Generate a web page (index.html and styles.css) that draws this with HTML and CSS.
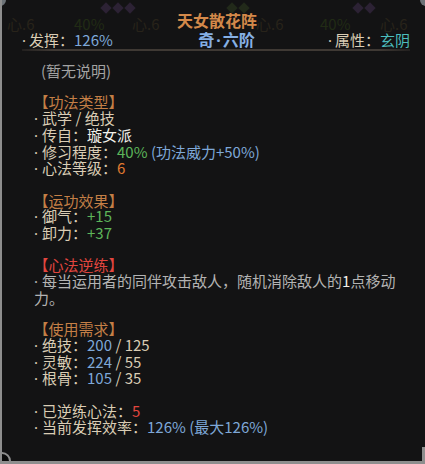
FILE: index.html
```html
<!DOCTYPE html>
<html lang="zh">
<head>
<meta charset="utf-8">
<link rel="stylesheet" href="styles.css">
</head>
<body>
<div class="tip">
  <div class="ghost">
    <span class="g-knob g-knob-l"></span>
    <span class="g-knob g-knob-r"></span>
    <span class="g-dia" style="left:100px"></span>
    <span class="g-dia" style="left:112px"></span>
    <span class="g-dia" style="left:124px"></span>
    <span class="g-dia g-dia-green" style="left:226px"></span>
    <span class="g-dia g-dia-green" style="left:238px"></span>
    <span class="g-dia" style="left:352px"></span>
    <span class="g-dia" style="left:364px"></span>
    <span class="g-txt g-brown" style="left:5px">心.6</span>
    <span class="g-txt g-green" style="left:72px">40%</span>
    <span class="g-txt g-brown" style="left:130px">心.6</span>
    <span class="g-txt g-brown" style="left:254px">心.6</span>
    <span class="g-txt g-green" style="left:318px">40%</span>
    <span class="g-txt g-brown" style="left:378px">心.6</span>
  </div>

  <div class="head">
    <div class="title">天女散花阵</div>
    <div class="subrow">
      <span class="sub-l"><span class="d">·</span>发挥：<span class="blue">126%</span></span>
      <span class="grade">奇<span class="d">·</span>六阶</span>
      <span class="sub-r"><span class="d">·</span>属性：<span class="cyan">玄阴</span></span>
    </div>
    <div class="sep"></div>
  </div>

  <div class="body">
    <div class="ln ind grey">(暂无说明)</div>
    <div class="gap"></div>
    <div class="ln ind sec"><span class="br">【</span>功法类型<span class="br">】</span></div>
    <div class="ln"><span class="d">·</span>武学 / 绝技</div>
    <div class="ln"><span class="d">·</span>传自：<span class="white">璇女派</span></div>
    <div class="ln"><span class="d">·</span>修习程度：<span class="green">40%</span> <span class="blue">(功法威力+50%)</span></div>
    <div class="ln"><span class="d">·</span>心法等级：<span class="orange">6</span></div>
    <div class="gap"></div>
    <div class="ln ind sec"><span class="br">【</span>运功效果<span class="br">】</span></div>
    <div class="ln"><span class="d">·</span>御气：<span class="green">+15</span></div>
    <div class="ln"><span class="d">·</span>卸力：<span class="green">+37</span></div>
    <div class="gap"></div>
    <div class="ln ind sec red"><span class="br">【</span>心法逆练<span class="br">】</span></div>
    <div class="ln desc"><span class="d">·</span>每当运用者的同伴攻击敌人，随机消除敌人的<span class="white">1</span>点移动力。</div>
    <div class="gap"></div>
    <div class="ln ind sec"><span class="br">【</span>使用需求<span class="br">】</span></div>
    <div class="ln"><span class="d">·</span>绝技：<span class="blue">200</span> / 125</div>
    <div class="ln"><span class="d">·</span>灵敏：<span class="blue">224</span> / 55</div>
    <div class="ln"><span class="d">·</span>根骨：<span class="blue">105</span> / 35</div>
    <div class="gap"></div>
    <div class="ln"><span class="d">·</span>已逆练心法：<span class="red">5</span></div>
    <div class="ln"><span class="d">·</span>当前发挥效率：<span class="blue">126% (最大126%)</span></div>
  </div>

  <span class="corner-bl"></span>
  <span class="corner-br"></span>
</div>
</body>
</html>
```

FILE: styles.css
```css
html, body {
  margin: 0;
  padding: 0;
  background: #121212;
}

.tip {
  position: relative;
  width: 425px;
  height: 464px;
  box-sizing: border-box;
  background: #131314;
  border-left: 2px solid #8e8e8e;
  border-bottom: 3px solid #8e8e8e;
  overflow: hidden;
  font-family: "Noto Sans CJK SC", "Noto Sans", sans-serif;
  font-size: 15px;
  color: #dacdb5;
}

/* faded items showing behind the tooltip */
.ghost {
  position: absolute;
  left: 0;
  top: 0;
  width: 425px;
  height: 60px;
  z-index: 0;
}
.g-txt {
  position: absolute;
  top: 14px;
  font-size: 15px;
  line-height: 20px;
}
.g-brown { color: #28231a; }
.g-green { color: #212b15; }
.g-dia {
  position: absolute;
  top: 4px;
  width: 8px;
  height: 8px;
  background: #2c2234;
  transform: rotate(45deg);
}
.g-dia-green { background: #222a1a; }
.g-knob {
  position: absolute;
  top: -6px;
  width: 12px;
  height: 12px;
  border-radius: 50%;
  background: #6d7378;
}
.g-knob-l { left: -8px; }
.g-knob-r { left: 418px; }

.head {
  position: relative;
  z-index: 1;
  padding: 10px 15px 0 20px;
}
.title {
  text-align: center;
  font-size: 16px;
  font-weight: bold;
  line-height: 20px;
  color: #d4894a;
  padding-left: 2px;
}
.subrow {
  display: flex;
  justify-content: space-between;
  align-items: center;
  line-height: 18px;
  height: 19px;
}
.grade {
  font-weight: bold;
  font-size: 16px;
  color: #86b0e4;
  margin-left: 12px;
}
.d {
  font-family: "Noto Sans", "DejaVu Sans", sans-serif;
  font-weight: normal;
  padding: 0 4px 0 0;
}
.subrow .d {
  padding: 0 3px 0 0;
}
.grade .d {
  font-weight: bold;
  padding: 0 2px;
}
.sep {
  height: 2px;
  background: linear-gradient(to right, rgba(70,62,56,0.3), #3f3934 8%, #3f3934 92%, rgba(70,62,56,0.3));
}

.body {
  position: relative;
  z-index: 1;
  padding: 12px 20px 0 32px;
}
.ln {
  line-height: 15.7px;
  min-height: 15.7px;
}
.gap { height: 15.7px; }
.ind { padding-left: 7px; }
.sec { color: #c47f46; }
.br { font-feature-settings: "halt"; }

.grey { color: #a3a3a3; }
.desc { color: #b3b3b3; }
.white { color: #f2f0ea; }
.blue { color: #7ea8d8; }
.cyan { color: #4cbdbd; }
.green { color: #5db55a; }
.orange { color: #e07a30; }
.red { color: #e2463f; }
.sec.red { color: #e2463f; }

.corner-bl {
  position: absolute;
  left: -9px;
  bottom: -9px;
  width: 14px;
  height: 14px;
  border-radius: 50%;
  background: #0a0a0a;
  border: 2px solid #8e8e8e;
}
.corner-br {
  position: absolute;
  right: 0;
  bottom: 0;
  width: 3px;
  height: 14px;
  background: #8e8e8e;
}
```
